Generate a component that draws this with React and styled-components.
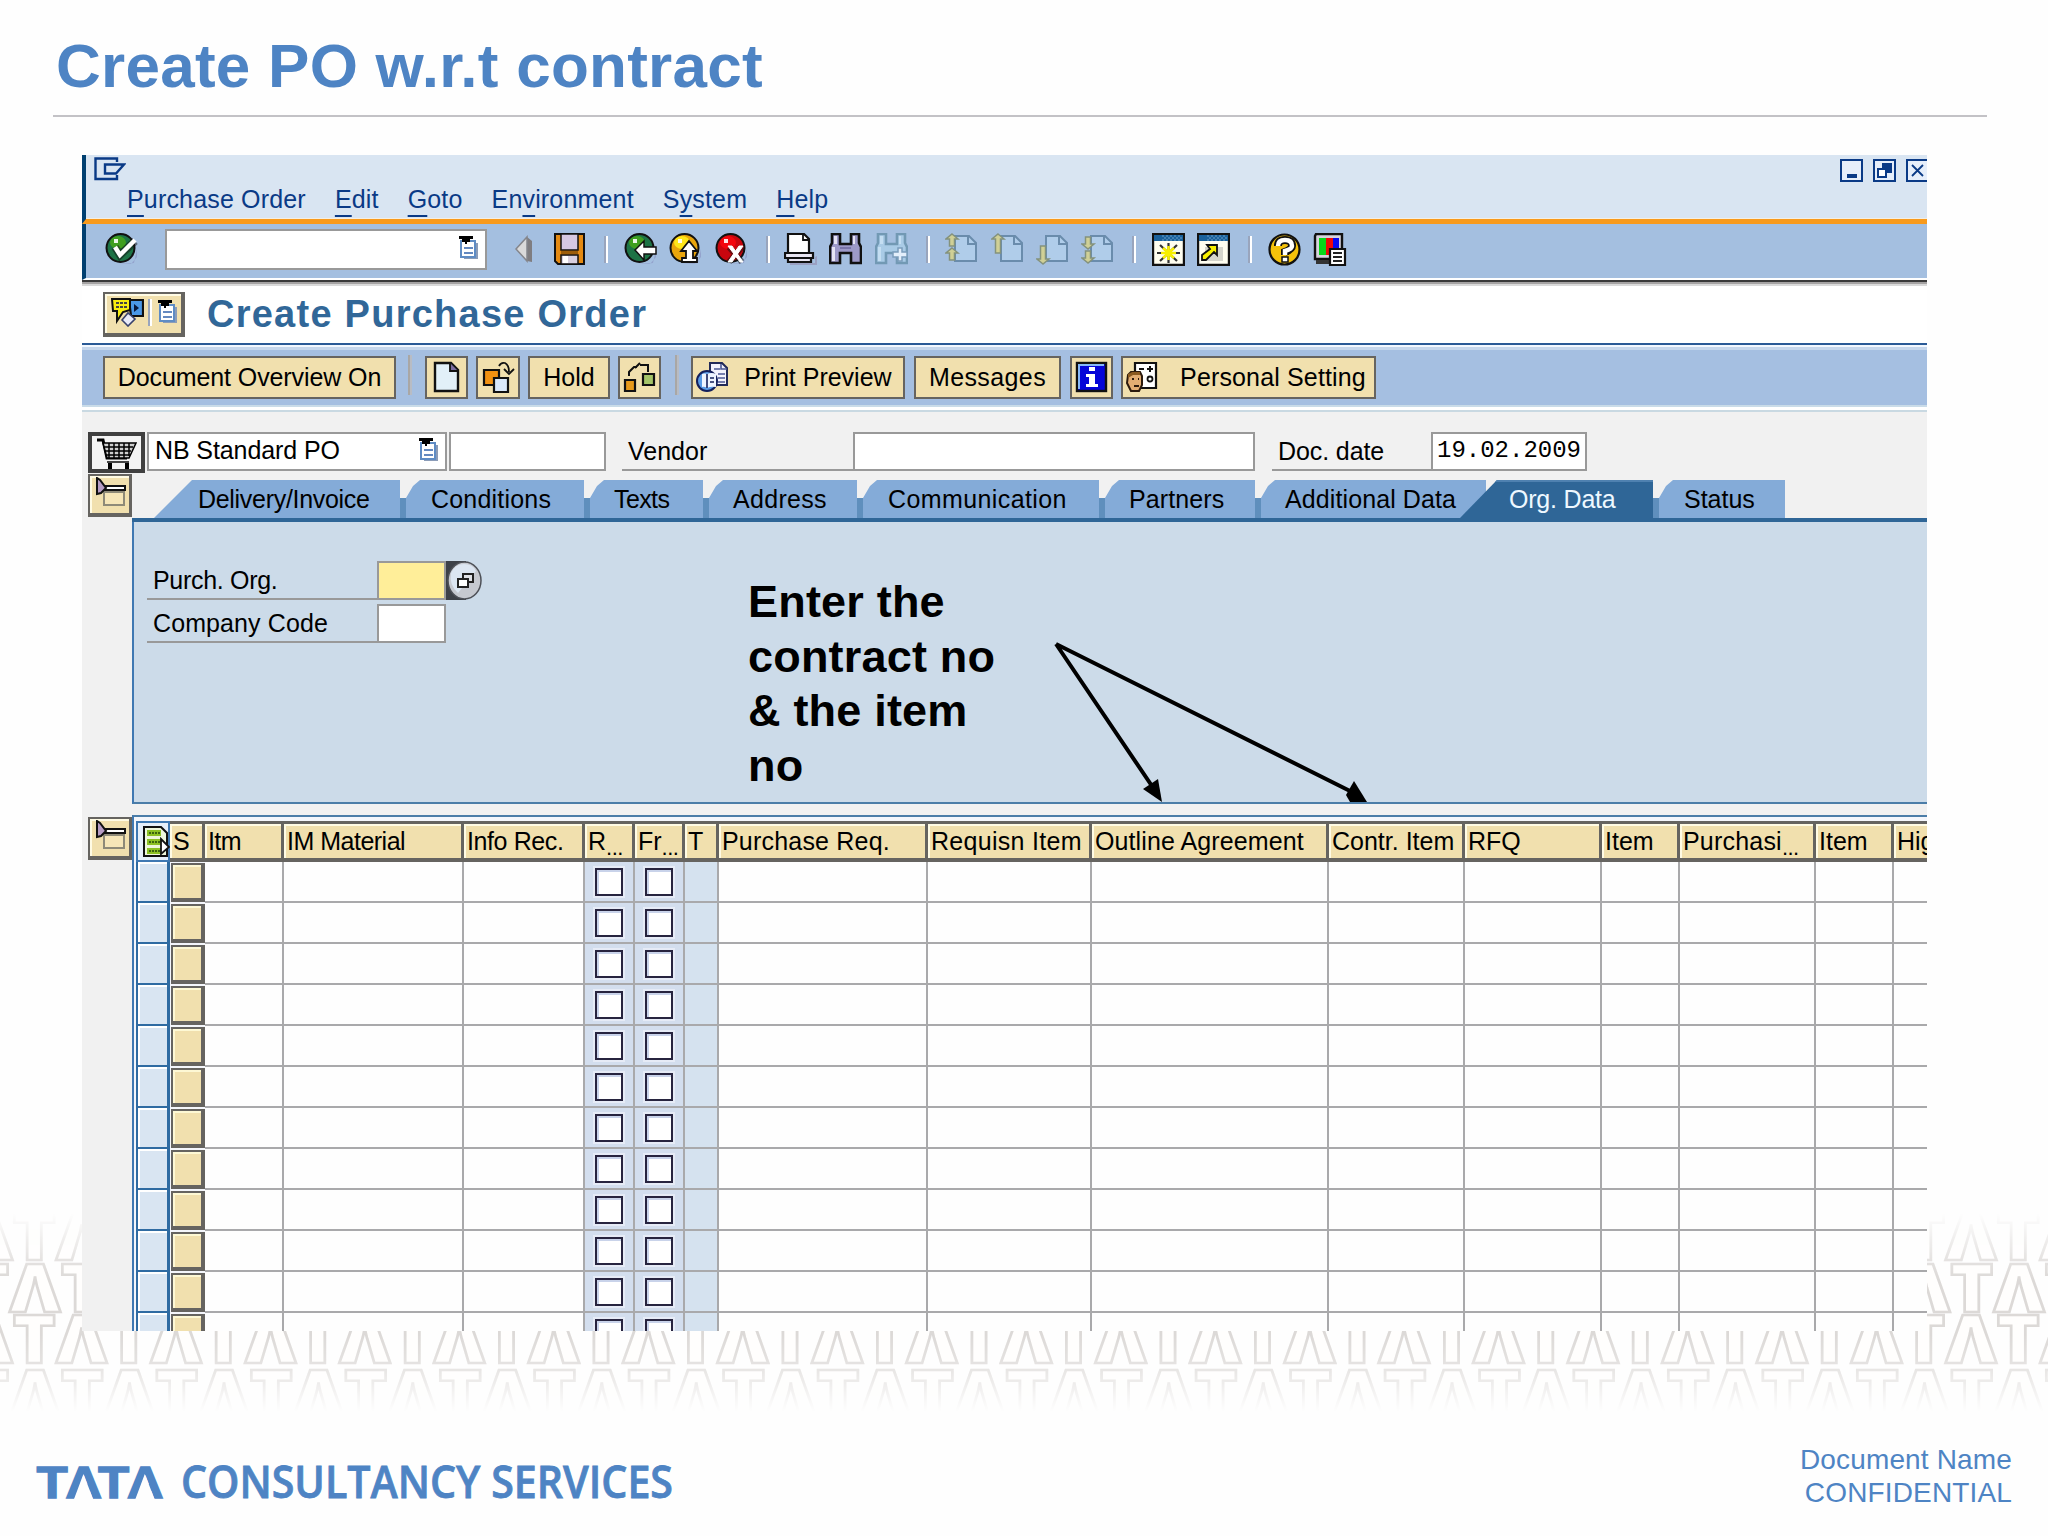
import React from 'react';
import styled, { createGlobalStyle, css } from 'styled-components';

const color = {
  brand: '#4e84c4',
  navy: '#0a3a86',
  frame: '#003f70',
  menu: '#d9e5f2',
  bar: '#a5bfe1',
  orange: '#f89a1c',
  tan: '#f1e0ae',
  edge: '#666460',
  field: '#999999',
  tab: '#84abd8',
  tabActive: '#2f6697',
  panel: '#ccdbe9',
  grid: '#a9a9ab',
};

const GlobalStyle = createGlobalStyle`
  * { box-sizing: border-box; }
  body {
    margin: 0;
    background: #fefefe;
    font-family: "Liberation Sans", Arial, sans-serif;
  }
`;

const Slide = styled.div`
  position: relative;
  display: flex;
  flex-direction: column;
  width: 2048px;
  height: 1536px;
  overflow: hidden;
  background: #fefefe;
`;

const SlideTitle = styled.h1`
  flex: none;
  width: 1934px;
  height: 117px;
  margin: 0 0 38px 53px;
  padding-left: 3px;
  border-bottom: 2px solid #c3c2c6;
  color: ${color.brand};
  font-size: 62px;
  letter-spacing: .26px;
  line-height: 131px;
  white-space: nowrap;
`;

const Watermark = styled.svg`
  position: absolute;
  left: 0;
  top: 1205px;
  mask-image: linear-gradient(transparent 4%, rgba(0, 0, 0, .8) 27%, #000 35%, #000 60%, rgba(0, 0, 0, .75) 74%, transparent 96%);
`;

const Window = styled.main`
  position: relative;
  display: flex;
  flex-direction: column;
  flex: none;
  width: 1845px;
  height: 1176px;
  margin-left: 82px;
  overflow: hidden;
  background: #fff;
  font-size: 25px;
  white-space: nowrap;
`;

const MenuBar = styled.header`
  flex: none;
  height: 69px;
  border-left: 4px solid ${color.frame};
  border-bottom: 5px solid ${color.orange};
  background: ${color.menu};
  box-shadow: inset 0 -1px #f4efe4;
`;

const WindowRow = styled.div`
  display: flex;
  align-items: flex-start;
  justify-content: space-between;
  height: 28px;
  padding: 2px 0 0 8px;
`;

const WindowButtons = styled.div`
  display: flex;
  gap: 10px;
  width: 87px;
  padding-top: 2px;
  overflow: hidden;
`;

const Menu = styled.nav`
  display: flex;
  gap: 29px;
  padding-left: 41px;
  color: ${color.navy};
  letter-spacing: .17px;
  line-height: 33px;

  u {
    text-decoration-thickness: 2px;
    text-underline-offset: 7px;
    text-decoration-skip-ink: none;
  }
`;

const Toolbar = styled.div`
  display: flex;
  align-items: center;
  flex: none;
  height: 56px;
  padding: 0 0 3px 0;
  border-left: 4px solid ${color.frame};
  border-bottom: 2px solid #fff;
  background: #a4bfe0;
`;

const ToolbarShadow = styled.div`
  flex: none;
  height: 6px;
  background: linear-gradient(#3a3a3a 0 2px, #a5a3a3 2px 4px, #d9d9d9 4px);
`;

const Icon = styled.svg`
  flex: none;
  width: ${(props) => props.$w || 33}px;
  height: ${(props) => props.$h || 33}px;
  margin-left: ${(props) => props.$ml || 0}px;
`;

const Separator = styled.i`
  flex: none;
  width: 4px;
  height: ${(props) => props.$tall ? 40 : 27}px;
  margin-left: ${(props) => props.$ml}px;
  border-left: 2px solid ${(props) => props.$tall ? '#a9a7a5' : '#99a5bd'};
  border-right: 2px solid ${(props) => props.$tall ? '#b8bcc4' : '#fff'};
`;

const Field = styled.div`
  display: flex;
  align-items: center;
  justify-content: space-between;
  flex: none;
  width: ${(props) => props.$w}px;
  height: ${(props) => props.$h || 39}px;
  margin-left: ${(props) => props.$ml || 0}px;
  padding: 0 6px 3px;
  border: 2px solid ${color.field};
  background: ${(props) => props.$required ? '#ffee99' : '#fff'};
  letter-spacing: ${(props) => props.$ls || 0}px;
  ${(props) => props.$mono && css`
    padding: 0 4px 3px;
    font-family: "Liberation Mono", monospace;
    font-size: 24px;
  `}
`;

const TitleRow = styled.div`
  display: flex;
  align-items: center;
  flex: none;
  height: 57px;
  padding-left: 21px;
`;

const TitleButton = styled.button`
  display: flex;
  align-items: center;
  width: 82px;
  height: 45px;
  padding: 0 0 3px 6px;
  border: solid ${color.edge};
  border-width: 2px 4px 4px 2px;
  background: ${color.tan};
  box-shadow: inset 2px 2px #fffbe4;
`;

const ScreenTitle = styled.h2`
  margin: 0 0 2px 22px;
  color: #316798;
  font-size: 38px;
  letter-spacing: 1.25px;
  line-height: 50px;
`;

const ButtonBar = styled.div`
  display: flex;
  align-items: center;
  flex: none;
  height: 62px;
  padding-left: 21px;
  border-top: 2px solid #2a5a96;
  background: linear-gradient(#f2f8ff 0 2px, #c6d7ec 2px 5px, ${color.bar} 5px);
`;

const BarRule = styled.div`
  flex: none;
  height: 7px;
  background: linear-gradient(#c9dbe8 0 2px, #fff 2px 5px, #c9d9e2 5px);
`;

const Button = styled.button`
  display: flex;
  align-items: center;
  justify-content: center;
  flex: none;
  width: ${(props) => props.$w}px;
  height: 43px;
  margin: 5px 0 0 ${(props) => props.$ml || 0}px;
  padding: 0;
  border: 2px solid ${color.edge};
  background: ${color.tan};
  color: #000;
  font: 25px "Liberation Sans", Arial, sans-serif;
  letter-spacing: ${(props) => props.$ls || 0}px;

  span { margin-left: ${(props) => props.$gap || 0}px; }
`;

const Body = styled.section`
  flex: 1;
  min-height: 0;
  background: #f1f1f1;
`;

const FormRow = styled.div`
  display: flex;
  align-items: flex-start;
  height: 61px;
  padding: 20px 0 0 6px;
`;

const CartBox = styled.div`
  display: flex;
  align-items: center;
  justify-content: center;
  width: 57px;
  height: 41px;
  margin-right: 2px;
  border: 4px solid #404040;
  background: #f4f4f4;
`;

const Label = styled.div`
  flex: none;
  width: ${(props) => props.$w}px;
  height: 39px;
  margin-left: ${(props) => props.$ml || 0}px;
  padding: 2px 0 0 6px;
  border-bottom: 2px solid ${color.field};
  letter-spacing: ${(props) => props.$ls || 0}px;
  line-height: 35px;
`;

const Section = styled.div`
  display: grid;
  grid-template-columns: 50px 1fr;
  height: ${(props) => props.$h}px;
`;

const Toggle = styled.button`
  width: 44px;
  height: 43px;
  margin: ${(props) => props.$mt || 0}px 0 0 6px;
  padding: 0 0 0 4px;
  border: solid ${color.edge};
  border-width: 2px 3px 4px 2px;
  background: ${color.tan};
  box-shadow: inset 2px 2px #fffbe4;
`;

const Tabs = styled.div`
  display: flex;
  height: 49px;
  padding: 7px 0 0 22px;
  border-bottom: 4px solid ${color.tabActive};
`;

const Tab = styled.div`
  position: relative;
  flex: none;
  width: ${(props) => props.$w}px;
  padding-left: ${(props) => props.$pl}px;
  background: ${color.tab};
  clip-path: polygon(0 18px, 6px 18px, 13px 6px, 20px 0, 100% 0, 100% 100%, 0 100%);
  letter-spacing: ${(props) => props.$ls || 0}px;
  line-height: 38px;

  &::before {
    content: "";
    position: absolute;
    left: 0;
    top: 18px;
    width: 6px;
    height: 20px;
    background: #5f8fbd;
  }

  ${(props) => (props.$first || props.$active) && css`
    clip-path: polygon(${props.$active ? 37 : 38}px 0, 100% 0, 100% 100%, 0 100%);
    &::before { display: none; }
  `}
  ${(props) => props.$active && css`
    margin-left: -26px;
    border-top: 2px solid #4f81b0;
    background: ${color.tabActive};
    color: #eef8ff;
    line-height: 34px;
  `}
`;

const Panel = styled.div`
  display: flex;
  align-items: flex-start;
  height: 282px;
  border-left: 2px solid #3f78b2;
  border-bottom: 2px solid #4b7da8;
  background: ${color.panel};
`;

const Fields = styled.div`
  display: flex;
  flex-direction: column;
  gap: 4px;
  width: 614px;
  padding: 39px 0 0 13px;
`;

const FieldLine = styled.div`
  display: flex;
`;

const Callout = styled.p`
  width: 250px;
  margin: 53px 0 0;
  font-size: 45px;
  font-weight: bold;
  letter-spacing: .2px;
  line-height: 54.6px;
  white-space: normal;
`;

const Arrows = styled.svg`
  width: 330px;
  height: 162px;
  margin: 118px 0 0 52px;
`;

const Table = styled.div`
  height: 516px;
  margin-top: 11px;
  padding: 4px 0 0 2px;
  overflow: hidden;
  border-left: 2px solid #3f78b2;
  border-top: 2px solid #4b7da8;
  background: #f4f6fb;
`;

const Row = styled.div`
  display: grid;
  grid-template-rows: 100%;
  grid-template-columns: 34px 35px 79px 180px 121px 50px 50px 34px 209px 164px 237px 136px 137px 78px 136px 78px 40px;
  height: 41px;
`;

const HeadCell = styled.div`
  padding-left: 3px;
  overflow: hidden;
  border: solid ${color.edge};
  border-width: 3px 3px 4px 0;
  background: ${color.tan};
  box-shadow: inset 2px 2px #fffbe4;
  letter-spacing: ${(props) => props.$ls || 0}px;
  line-height: 35px;

  small {
    position: relative;
    top: 5px;
    font-size: 22px;
    letter-spacing: -.5px;
    line-height: 1;
  }
`;

const SelectHead = styled.div`
  padding: 2px 0 0 4px;
  border: 2px solid #3f78b2;
  background: #e6effa;
`;

const Cell = styled.div`
  display: flex;
  align-items: center;
  justify-content: center;
  border-right: 2px solid ${color.grid};
  border-bottom: 2px solid ${color.grid};
  background: ${(props) => props.$tint || '#fefefe'};
`;

const SelectCell = styled.div`
  border: solid #2f6ba2;
  border-width: 0 3px 2px 2px;
  background: ${color.menu};
  box-shadow: inset 2px 2px #fff;
`;

const RowButton = styled.div`
  margin: 1px 0 1px 1px;
  border: solid ${color.edge};
  border-width: 2px 4px 4px 2px;
  background: ${color.tan};
  box-shadow: inset 2px 2px #fdf8d4;
`;

const CheckBox = styled.div`
  width: 28px;
  height: 28px;
  margin-top: 1px;
  border: 2px solid #27243f;
  outline: 2px solid #e6ebf6;
  background: #fff;
  box-shadow: inset 2px 2px #c9d3ea;
`;

const Footer = styled.footer`
  position: relative;
  display: flex;
  align-items: flex-start;
  justify-content: space-between;
  padding: 112px 36px 0 30px;
  color: ${color.brand};
`;

const Logo = styled.svg`
  width: 660px;
  height: 70px;
`;

const Confidential = styled.div`
  font-size: 28px;
  letter-spacing: .15px;
  line-height: 33.3px;
  text-align: right;
`;

/* icons */

const Ball = ({ fill, shine, children }) => (
  <>
    <path d="M12 31H26L32 24V16L29 30Z" fill="#8d97c4" opacity=".7" />
    <circle cx="15.500" cy="15" r="14" fill={fill} stroke="#111" strokeWidth="2" />
    <ellipse cx="13" cy="9.500" rx="8" ry="6.500" fill={shine} />
    <rect x="9" y="6" width="4" height="4" fill="#fff" opacity=".9" />
    {children}
  </>
);

const OkIcon = (props) => (
  <Icon viewBox="0 0 33 33" {...props}>
    <Ball fill="#1d7346" shine="#3f9f20">
      <path d="M10 14L15 22L30 8" fill="none" stroke="#111" strokeWidth="8" opacity=".5" />
      <path d="M10 14L15 22L30 7" fill="none" stroke="#fff" strokeWidth="4.500" />
    </Ball>
  </Icon>
);

const BackIcon = (props) => (
  <Icon viewBox="0 0 33 33" {...props}>
    <Ball fill="#1d7346" shine="#3f9f20">
      <path d="M11 17L20 8V14H32V21H20V27Z" fill="#fff" stroke="#111" strokeWidth="1.500" />
    </Ball>
  </Icon>
);

const UpIcon = (props) => (
  <Icon viewBox="0 0 33 33" {...props}>
    <Ball fill="#e9a50c" shine="#ffe61a">
      <path d="M20 8L28 18H24V25H28V29H13V25H17V18H12Z" fill="#fff" stroke="#111" strokeWidth="1.800" />
    </Ball>
  </Icon>
);

const CancelIcon = (props) => (
  <Icon viewBox="0 0 33 33" {...props}>
    <Ball fill="#c9060e" shine="#f3060e">
      <path d="M14 14L27 29M27 14L14 29" stroke="#111" strokeWidth="6" opacity=".5" />
      <path d="M13 13H17L28 29H25ZM24 13H28L17 29H13Z" fill="#fff" stroke="#fff" strokeWidth="1" />
    </Ball>
  </Icon>
);

const ListIcon = (props) => (
  <Icon viewBox="0 0 20 24" $w={20} $h={24} {...props}>
    <path d="M5 7H19V23H5Z" fill="#8b9cb8" />
    <path d="M2 5H16V21H2Z" fill="#fff" stroke="#5f8cc4" strokeWidth="2" />
    <path d="M5 12H14M5 17H14" stroke="#6489c0" strokeWidth="1.800" />
    <path d="M0 0H14V3H11V6H8V8H6V6H3V3H0Z" fill="#000" />
  </Icon>
);

const ArrowLeftIcon = (props) => (
  <Icon viewBox="0 0 18 33" $w={18} {...props}>
    <path d="M12 4L17 8V29L12 28Z" fill="#7f7d80" />
    <path d="M1 16L12 4V28Z" fill="#dadada" stroke="#85868c" strokeWidth="1.500" />
  </Icon>
);

const SaveIcon = (props) => (
  <Icon viewBox="0 0 33 33" {...props}>
    <path d="M3 1H31V31H5L2 28V1Z" fill="#e58a12" stroke="#111" strokeWidth="2" />
    <path d="M8 1H25V17H8Z" fill="#d6c8e2" stroke="#111" strokeWidth="1.500" />
    <path d="M8 22H25V31H8Z" fill="#d8d0e0" stroke="#111" strokeWidth="1.500" />
    <path d="M10 23H15V30H10Z" fill="#fff" />
    <path d="M8 19.500H25" stroke="#9c5d0a" strokeWidth="3" />
  </Icon>
);

const PrintIcon = (props) => (
  <Icon viewBox="0 0 33 33" {...props}>
    <path d="M6 30H31V24L33 23V32H6Z" fill="#9aa0c2" />
    <path d="M4 20V1H20L25 6V20Z" fill="#fff" stroke="#111" strokeWidth="2.200" />
    <path d="M19 2V7H25" fill="none" stroke="#111" strokeWidth="1.800" />
    <path d="M1 20H29V25H1ZM4 25H27V29H4Z" fill="#e9e6f2" stroke="#111" strokeWidth="2.200" />
  </Icon>
);

const FindIcon = ({ plus, ...props }) => (
  <Icon viewBox="0 0 33 33" {...props}>
    <path
      d="M3 1H11V11H22V1H30V10L32 14V30H22V20H11V30H1V14L3 10Z"
      fill={plus ? '#a9cbe6' : '#9d99c8'}
      stroke={plus ? '#7299b4' : '#111'}
      strokeWidth="2.600"
    />
    <path d="M5 3H8V11H5ZM3 14H6V28H3ZM24 3H26V11H24Z" fill={plus ? '#c4def2' : '#e6e4f4'} />
    {!plus && <path d="M11 15H22" stroke="#7974a8" strokeWidth="2" />}
    {plus && <path d="M23 15H27V19H32V24H27V28H23V24H18V19H23Z" fill="#e4effb" stroke="#7b9dbc" strokeWidth="1.500" />}
  </Icon>
);

const arrowUp = (y, len) => `M7 ${y}L13 ${y + 5}H9.500V${y + len}H4.500V${y + 5}H1Z`;
const arrowDown = (y, len) => `M7 ${y + len}L1 ${y + len - 5}H4.500V${y}H9.500V${y + len - 5}H13Z`;

const PageIcon = ({ arrows, ...props }) => (
  <Icon viewBox="0 0 33 33" {...props}>
    <path d="M10 3H24L31 10V28H10Z" fill="#b0cdea" stroke="#6a8cac" strokeWidth="2" />
    <path d="M23 3V11H31" fill="none" stroke="#6a8cac" strokeWidth="2" />
    {arrows.map((d) => <path key={d} d={d} fill="#d0d096" stroke="#84927c" strokeWidth="1.500" />)}
  </Icon>
);

const SessionIcon = ({ shortcut, ...props }) => (
  <Icon viewBox="0 0 33 33" {...props}>
    <path d="M1 1H32V32H1Z" fill="#fffef0" stroke="#111" strokeWidth="2.400" />
    <path d="M2 2H31V8H2Z" fill="#1a619c" />
    <path d="M10 3H28M12 5H30M10 7H28" stroke="#6d9fc8" strokeWidth="1" strokeDasharray="2 2" />
    {shortcut ? (
      <>
        <path d="M8 14H26V28H8Z" fill="#d5d5cc" />
        <path d="M5 27V22L13 16L10 12H20V22L17 19L9 27Z" fill="#f8f000" stroke="#111" strokeWidth="1.800" />
      </>
    ) : (
      <>
        <path d="M5 20H28M16.500 10V30M8 12L25 28M25 12L8 28" stroke="#333" strokeWidth="2.200" />
        <path d="M9 20H24M16.500 13V27M11 15L22 25M22 15L11 25" stroke="#f8f000" strokeWidth="2.600" />
      </>
    )}
  </Icon>
);

const HelpIcon = (props) => (
  <Icon viewBox="0 0 33 33" {...props}>
    <circle cx="16.500" cy="16.500" r="15" fill="#f5c20a" stroke="#111" strokeWidth="2.200" />
    <path d="M10 13Q10 7 17 7T24 13Q24 16 17 19V22" fill="none" stroke="#111" strokeWidth="8" />
    <path d="M10 13Q10 7 17 7T24 13Q24 16 17 18V22" fill="none" stroke="#fff" strokeWidth="4.500" />
    <rect x="14" y="24" width="6" height="5" fill="#fff" stroke="#111" strokeWidth="1.500" />
  </Icon>
);

const LayoutIcon = (props) => (
  <Icon viewBox="0 0 34 33" $w={34} {...props}>
    <path d="M3 1H29V26H2V3Z" fill="#d7d4de" stroke="#111" strokeWidth="2.400" />
    <path d="M3 29H20" stroke="#333" strokeWidth="4" />
    <path d="M6 5H13V22H6Z" fill="#08d818" />
    <path d="M13 5H20V22H13Z" fill="#f00808" />
    <path d="M20 5H26V18H20Z" fill="#0808f0" />
    <path d="M17 16H32V32H17Z" fill="#fff" stroke="#111" strokeWidth="2.200" />
    <path d="M20 20H29M20 24H29M20 28H29" stroke="#222" strokeWidth="2" />
  </Icon>
);

const SystemIcon = () => (
  <Icon viewBox="0 0 32 24" $w={32} $h={24}>
    <path d="M23 5V1.500H1.500V22H23V18" fill="none" stroke={color.navy} strokeWidth="2.400" />
    <path d="M11 7.500H30L22 16.500H11Z" fill="none" stroke={color.navy} strokeWidth="2.400" />
  </Icon>
);

const WindowIcon = ({ children }) => (
  <Icon viewBox="0 0 23 23" $w={23} $h={23}>
    <rect x="1" y="1" width="21" height="21" fill="#e6eefa" stroke={color.navy} strokeWidth="2" />
    {children}
  </Icon>
);

const NewDocIcon = () => (
  <Icon viewBox="0 0 33 33">
    <path d="M5 2H21L28 9V30H5Z" fill="#e2f0f8" stroke="#111" strokeWidth="2.400" />
    <path d="M20 2V10H28" fill="#7c6ca0" stroke="#111" strokeWidth="1.800" />
  </Icon>
);

const CopyIcon = () => (
  <Icon viewBox="0 0 33 33">
    <path d="M2 9H17V24H2Z" fill="#f29111" stroke="#111" strokeWidth="2.200" />
    <path d="M12 17H26V31H12Z" fill="#d9e8fa" stroke="#111" strokeWidth="2.200" />
    <path d="M17 5Q19 1 23 2Q27 4 27 11M22 8L27 13L32 8" fill="none" stroke="#111" strokeWidth="1.800" />
  </Icon>
);

const HierarchyIcon = () => (
  <Icon viewBox="0 0 33 33">
    <path d="M2 19H12V30H2Z" fill="#e89a1a" stroke="#111" strokeWidth="2.200" />
    <path d="M20 13H31V24H20Z" fill="#a4c468" stroke="#111" strokeWidth="2.200" />
    <path d="M6 15V11L11 6H14M12 7L17 2M17 4H25V11" fill="none" stroke="#111" strokeWidth="2" />
  </Icon>
);

const PreviewIcon = () => (
  <Icon viewBox="0 0 33 33" $ml={-8}>
    <path d="M14 2H26L31 7V24H14Z" fill="#f2f2fc" stroke="#222a58" strokeWidth="2" />
    <path d="M18 8H24M22 13H29M22 17H29M22 21H29M25 3V8H31" fill="none" stroke="#4c5894" strokeWidth="1.600" />
    <circle cx="11" cy="20" r="10" fill="#5a9be6" stroke="#14205c" strokeWidth="2" />
    <path d="M11 13Q16 11 20 13V26Q15 25 11 27Q8 25 6 26V13Q9 12 11 13Z" fill="#eef4ff" />
    <path d="M11 13V27M14 17H18M14 21H18" stroke="#14205c" strokeWidth="1.600" />
  </Icon>
);

const InfoIcon = () => (
  <Icon viewBox="0 0 33 33">
    <rect x="2" y="2" width="29" height="28" fill="#0505d8" stroke="#111" strokeWidth="2.400" />
    <path d="M4 28V4H29" fill="none" stroke="#86b8f8" strokeWidth="2" />
    <path d="M14 6H20V10H14ZM11 13H20V23H23V26H11V23H14V16H11Z" fill="#fff" />
  </Icon>
);

const PersonIcon = () => (
  <Icon viewBox="0 0 33 33" $ml={-6}>
    <path d="M10 2H31V27H10Z" fill="#fff" stroke="#111" strokeWidth="2.200" />
    <path d="M14 8H19M22 8H28M25 5V11" stroke="#111" strokeWidth="2" />
    <circle cx="25" cy="18" r="2.500" fill="none" stroke="#111" strokeWidth="1.800" />
    <path d="M3 14L6 11H15L17 15V24L14 30H6L2 22Z" fill="#e2ad72" stroke="#2c1a0c" strokeWidth="2" />
    <path d="M3 17V13L7 11H15V14H8Z" fill="#8a5a20" />
    <path d="M7 18H9M13 18H14M9 25H14" stroke="#2c1a0c" strokeWidth="2" />
  </Icon>
);

const ServiceIcon = () => (
  <Icon viewBox="0 0 33 30" $h={30}>
    <path d="M18 3H32V19H20Z" fill="#4a98e8" stroke="#111" strokeWidth="2.200" />
    <path d="M23 7L28 11L23 15Z" fill="#08183c" />
    <path d="M11 23L17 16L24 22L17 29Z" fill="#e8eaf8" stroke="#39426c" strokeWidth="1.600" />
    <path d="M1 2H19V13L12 15L6 24V14H2Z" fill="#f8ee10" stroke="#111" strokeWidth="2" />
    <path d="M5 6H16M5 10H16" stroke="#444" strokeWidth="1.800" strokeDasharray="3 1" />
  </Icon>
);

const CartIcon = () => (
  <Icon viewBox="0 0 44 33" $w={44}>
    <path d="M2 4H8L12 22H32" fill="none" stroke="#000" strokeWidth="3" />
    <path d="M8 7H41L34 22H12Z" fill="#cfcfcf" stroke="#000" strokeWidth="1.500" />
    <path d="M14 7V22M19 7V22M24 7V22M29 7V22M34 7V20M9 11H38M10 15H36M11 19H35" stroke="#000" strokeWidth="1.500" />
    <path d="M12 26H34" stroke="#444" strokeWidth="2" />
    <path d="M13 27H17V33H13ZM30 27H34V33H30Z" fill="#000" />
  </Icon>
);

const ToggleIcon = () => (
  <Icon viewBox="0 0 33 33">
    <path d="M9 15H29V28H9Z" fill="#f6e6b8" stroke="#8e8a78" strokeWidth="2" />
    <path d="M10 9H30V13H10Z" fill="#fff" stroke="#111" strokeWidth="2" />
    <path d="M2 1V17L6 16L11 11L5 3Z" fill="#b69cc4" stroke="#111" strokeWidth="2" />
  </Icon>
);

const MatchcodeIcon = () => (
  <Icon viewBox="0 0 37 39" $w={37} $h={39}>
    <path d="M0 0H20V39H0Z" fill="#3d4148" />
    <ellipse cx="18.500" cy="19.500" rx="16.500" ry="18.500" fill="#c6c9d0" stroke="#4e5158" strokeWidth="1.500" />
    <path d="M5 12Q9 3 18 3T30 10L12 32Q3 24 5 12Z" fill="#dce6f2" />
    <path d="M17 13H27V21H17Z" fill="#dfe1e6" stroke="#222" strokeWidth="2" />
    <path d="M12 18H22V26H12Z" fill="#fff" stroke="#222" strokeWidth="2" />
  </Icon>
);

const SelectAllIcon = () => (
  <Icon viewBox="0 0 28 33" $w={28}>
    <path d="M2 2H19L25 8V31H2Z" fill="#eef6dc" stroke="#111" strokeWidth="2" />
    <path d="M5 5H19V11H5ZM5 14H19V20H5ZM5 23H19V29H5Z" fill="#8cc024" />
    <path d="M7 8H18M7 17H18M7 26H18" stroke="#3c6410" strokeWidth="2" strokeDasharray="2 1" />
    <path d="M19 14L27 22L19 29Z" fill="#fff" stroke="#111" strokeWidth="1.800" />
  </Icon>
);

/* data */

const tabs = [
  { label: 'Delivery/Invoice', w: 246, pl: 44, ls: -.3, first: true },
  { label: 'Conditions', w: 184, pl: 31, ls: .2 },
  { label: 'Texts', w: 119, pl: 30, ls: -.6 },
  { label: 'Address', w: 154, pl: 30, ls: .3 },
  { label: 'Communication', w: 242, pl: 31, ls: .4 },
  { label: 'Partners', w: 156, pl: 30, ls: .1 },
  { label: 'Additional Data', w: 231, pl: 30, ls: .1 },
  { label: 'Org. Data', w: 193, pl: 49, ls: -.2, active: true },
  { label: 'Status', w: 132, pl: 31, ls: 0 },
];

const columns = [
  { label: 'S' },
  { label: 'Itm', ls: -.6 },
  { label: 'IM Material', ls: -.5 },
  { label: 'Info Rec.', ls: -.4 },
  { label: 'R', cut: true },
  { label: 'Fr', cut: true },
  { label: 'T' },
  { label: 'Purchase Req.', ls: .2 },
  { label: 'Requisn Item', ls: .3 },
  { label: 'Outline Agreement', ls: .1 },
  { label: 'Contr. Item', ls: 0 },
  { label: 'RFQ' },
  { label: 'Item' },
  { label: 'Purchasi', ls: .2, cut: true },
  { label: 'Item' },
  { label: 'High' },
];

const rows = Array.from({ length: 12 }, (_, i) => i);
const tints = { 4: '#d3deee', 5: '#d3deee', 6: '#d5e2ef' };

const pattern = 'TΛ'.repeat(23);

const Background = () => (
  <Watermark width="2048" height="215" aria-hidden="true">
    <g
      fill="#fffefd"
      stroke="#dcd9d7"
      strokeWidth="2.500"
      fontFamily="Open Sans"
      fontWeight="800"
      fontSize="67"
    >
      {[55, 107, 158, 213].map((y, i) => (
        <text key={y} x={i % 2 ? -34 : -82} y={y} textLength="2173" lengthAdjust="spacingAndGlyphs">{pattern}</text>
      ))}
    </g>
  </Watermark>
);

const ItemTable = () => (
  <Table>
    <Row>
      <SelectHead><SelectAllIcon /></SelectHead>
      {columns.map((col, i) => (
        <HeadCell key={i} $ls={col.ls}>{col.label}{col.cut && <small>...</small>}</HeadCell>
      ))}
    </Row>
    {rows.map((row) => (
      <Row key={row}>
        <SelectCell />
        {columns.map((col, i) => (
          i === 0
            ? <RowButton key={i} />
            : <Cell key={i} $tint={tints[i]}>{(i === 4 || i === 5) && <CheckBox />}</Cell>
        ))}
      </Row>
    ))}
  </Table>
);

export default function App() {
  return (
    <Slide>
      <GlobalStyle />
      <Background />
      <SlideTitle>Create PO w.r.t contract</SlideTitle>

      <Window>
        <MenuBar>
          <WindowRow>
            <SystemIcon />
            <WindowButtons>
              <WindowIcon><path d="M7 15H17V19H7Z" fill={color.navy} /></WindowIcon>
              <WindowIcon>
                <path d="M9 4H19V14H9Z" fill={color.navy} />
                <path d="M5 10H13V18H5Z" fill="#fff" stroke={color.navy} strokeWidth="2" />
              </WindowIcon>
              <WindowIcon><path d="M6 6L17 17M17 6L6 17" stroke={color.navy} strokeWidth="1.800" /></WindowIcon>
            </WindowButtons>
          </WindowRow>
          <Menu>
            <span><u>P</u>urchase Order</span>
            <span><u>E</u>dit</span>
            <span><u>G</u>oto</span>
            <span>En<u>v</u>ironment</span>
            <span>S<u>y</u>stem</span>
            <span><u>H</u>elp</span>
          </Menu>
        </MenuBar>

        <Toolbar>
          <OkIcon $ml={19} />
          <Field $ml={27} $w={322} $h={41}><span /><ListIcon /></Field>
          <ArrowLeftIcon $ml={28} />
          <SaveIcon $ml={20} />
          <Separator $ml={18} />
          <BackIcon $ml={16} />
          <UpIcon $ml={12} />
          <CancelIcon $ml={13} />
          <Separator $ml={18} />
          <PrintIcon $ml={14} />
          <FindIcon $ml={12} />
          <FindIcon $ml={13} plus />
          <Separator $ml={18} />
          <PageIcon $ml={15} arrows={[arrowUp(1, 12), arrowUp(15, 12)]} />
          <PageIcon $ml={13} arrows={[arrowUp(1, 19)]} />
          <PageIcon $ml={12} arrows={[arrowDown(13, 18)]} />
          <PageIcon $ml={12} arrows={[arrowDown(4, 12), arrowDown(18, 12)]} />
          <Separator $ml={18} />
          <SessionIcon $ml={16} />
          <SessionIcon $ml={12} shortcut />
          <Separator $ml={18} />
          <HelpIcon $ml={16} />
          <LayoutIcon $ml={12} />
        </Toolbar>
        <ToolbarShadow />

        <TitleRow>
          <TitleButton>
            <ServiceIcon />
            <Separator $ml={4} />
            <ListIcon $ml={6} />
          </TitleButton>
          <ScreenTitle>Create Purchase Order</ScreenTitle>
        </TitleRow>

        <ButtonBar>
          <Button $w={293} $ls={-.1}>Document Overview On</Button>
          <Separator $ml={12} $tall />
          <Button $ml={13} $w={43}><NewDocIcon /></Button>
          <Button $ml={8} $w={44}><CopyIcon /></Button>
          <Button $ml={8} $w={82}>Hold</Button>
          <Button $ml={8} $w={43}><HierarchyIcon /></Button>
          <Separator $ml={14} $tall />
          <Button $ml={12} $w={214} $gap={15}><PreviewIcon /><span>Print Preview</span></Button>
          <Button $ml={9} $w={147} $ls={.4}>Messages</Button>
          <Button $ml={9} $w={43}><InfoIcon /></Button>
          <Button $ml={8} $w={255} $ls={.15} $gap={22}><PersonIcon /><span>Personal Setting</span></Button>
        </ButtonBar>
        <BarRule />

        <Body>
          <FormRow>
            <CartBox><CartIcon /></CartBox>
            <Field $w={300} $ls={-.1}>NB Standard PO<ListIcon /></Field>
            <Field $ml={2} $w={157} />
            <Label $ml={16} $w={231}>Vendor</Label>
            <Field $w={402} />
            <Label $ml={17} $w={159} $ls={-.1}>Doc. date</Label>
            <Field $w={156} $mono>19.02.2009</Field>
          </FormRow>

          <Section $h={331}>
            <Toggle $mt={1}><ToggleIcon /></Toggle>
            <div>
              <Tabs>
                {tabs.map((tab) => (
                  <Tab
                    key={tab.label}
                    $w={tab.w}
                    $pl={tab.pl}
                    $ls={tab.ls}
                    $first={tab.first}
                    $active={tab.active}
                  >
                    {tab.label}
                  </Tab>
                ))}
              </Tabs>
              <Panel>
                <Fields>
                  <FieldLine>
                    <Label $w={230} $ls={-.3}>Purch. Org.</Label>
                    <Field $w={69} $required />
                    <MatchcodeIcon />
                  </FieldLine>
                  <FieldLine>
                    <Label $w={230} $ls={.1}>Company Code</Label>
                    <Field $w={69} />
                  </FieldLine>
                </Fields>
                <Callout>Enter the contract no &amp; the item no</Callout>
                <Arrows viewBox="0 0 330 162">
                  <path d="M6 4L106 152M6 4L306 154" stroke="#000" strokeWidth="4" fill="none" />
                  <path d="M112 162L93 149L108 139Z" fill="#000" />
                  <path d="M317 162H300L296 155L304 141Z" fill="#000" />
                </Arrows>
              </Panel>
            </div>
          </Section>

          <Section $h={527}>
            <Toggle $mt={13}><ToggleIcon /></Toggle>
            <ItemTable />
          </Section>
        </Body>
      </Window>

      <Footer>
        <Logo viewBox="0 0 660 70" fill={color.brand}>
          <g transform="scale(1.12 1)">
            <text
              x="6 31.8 61 86.6"
              y="55"
              fontFamily="Liberation Sans"
              fontWeight="bold"
              fontSize="45"
              stroke={color.brand}
              strokeWidth="1.600"
            >
              TATA
            </text>
            {/* open counters of the two As */}
            <path d="M39 57L47.700 31L56.700 57ZM93.800 57L102.500 31L111.500 57Z" fill="#fefefe" />
          </g>
          <text
            x="151"
            y="55"
            fontFamily="Open Sans"
            fontWeight="600"
            fontSize="45"
            stroke={color.brand}
            strokeWidth=".8"
            textLength="492"
            lengthAdjust="spacingAndGlyphs"
          >
            CONSULTANCY SERVICES
          </text>
        </Logo>
        <Confidential>Document Name<br />CONFIDENTIAL</Confidential>
      </Footer>
    </Slide>
  );
}
